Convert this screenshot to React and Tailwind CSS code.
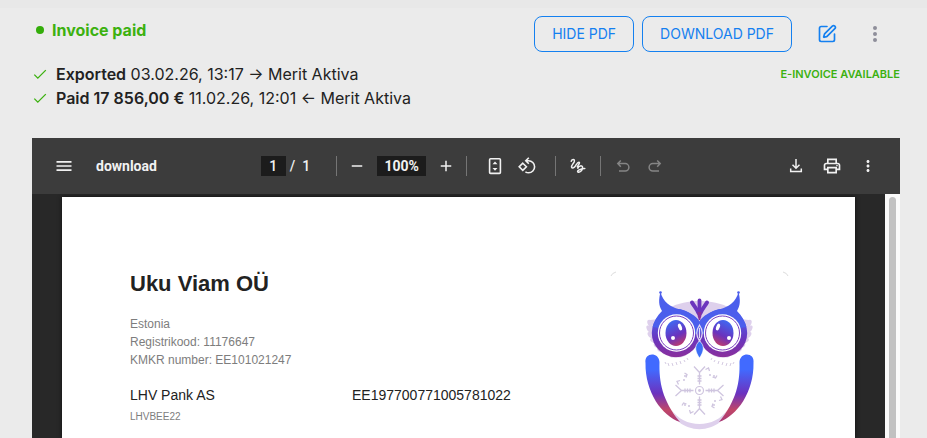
import { MdMenu, MdMoreVert, MdOutlinePrint, MdAdd, MdRemove } from 'react-icons/md'
import { SquarePen } from 'lucide-react'

const SYNC_LOG = [
  { id: 'export', label: 'Exported', detail: '03.02.26, 13:17 → Merit Aktiva' },
  { id: 'paid', label: 'Paid 17 856,00 €', detail: '11.02.26, 12:01 ← Merit Aktiva' },
]

export default function App() {
  return (
    <div className="flex flex-col h-screen overflow-hidden bg-[#ebebeb] border-t-8 border-[#e8e8e8] pl-8 pr-[27px] font-['Inter',sans-serif] text-[#222]">
      <InvoiceHeader />
      <SyncLog />
      <PdfViewer />
    </div>
  )
}

function InvoiceHeader() {
  return (
    <header className="flex items-start justify-between pt-2">
      <div className="flex items-center gap-2 h-7 pl-1">
        <span className="w-2 h-2 rounded-full bg-[#34ad0a]" />
        <h1 className="text-base font-bold text-[#3cb110]">Invoice paid</h1>
      </div>
      <div className="flex items-center gap-2">
        <OutlineButton>HIDE PDF</OutlineButton>
        <OutlineButton>DOWNLOAD PDF</OutlineButton>
        <button aria-label="Edit invoice" className="w-9 h-9 ml-[9px] flex items-center justify-center text-[#1480f0]">
          <SquarePen className="w-5 h-5" strokeWidth={2} />
        </button>
        <button aria-label="More actions" className="w-9 h-9 ml-1 mr-[7px] flex items-center justify-center text-[#8e8e9a]">
          <svg viewBox="0 0 20 20" className="w-5 h-5" fill="currentColor">
            <circle cx="10" cy="4" r="2" />
            <circle cx="10" cy="10" r="2" />
            <circle cx="10" cy="16" r="2" />
          </svg>
        </button>
      </div>
    </header>
  )
}

function OutlineButton({ children }) {
  return (
    <button className="h-9 px-[17px] rounded-lg border border-[#1480f0] text-sm text-[#1480f0] whitespace-nowrap">
      {children}
    </button>
  )
}

function SyncLog() {
  return (
    <div className="flex items-start justify-between pt-[10px] pb-7">
      <ul>
        {SYNC_LOG.map((entry) => (
          <li key={entry.id} className="flex items-center gap-2 text-base leading-6">
            <svg viewBox="0 0 16 16" className="w-4 h-4 text-[#3cb110]" fill="none" stroke="currentColor" strokeWidth="1.3">
              <path d="M2.3 8.6l3.5 3.5 8-8" />
            </svg>
            <span><b className="font-semibold">{entry.label}</b> {entry.detail}</span>
          </li>
        ))}
      </ul>
      <span className="text-[11px] leading-6 font-semibold text-[#3cb110]">E-INVOICE AVAILABLE</span>
    </div>
  )
}

function PdfViewer() {
  return (
    <section className="flex-1 min-h-0 flex flex-col bg-[#282828]">
      <PdfToolbar />
      <div className="flex-1 min-h-0 flex">
        <div className="flex-1 px-[30px] pt-[3px] overflow-hidden">
          <InvoicePage />
        </div>
        <div className="w-[15px] bg-[#fafafa] px-1 pt-[3px]">
          <div className="h-full rounded-t-full bg-[#c1c1c1]" />
        </div>
      </div>
    </section>
  )
}

function ToolButton({ label, disabled, children }) {
  return (
    <button
      aria-label={label}
      disabled={disabled}
      className="w-8 h-8 flex-shrink-0 flex items-center justify-center disabled:text-[#858585]"
    >
      {children}
    </button>
  )
}

function Divider({ className }) {
  return <div className={`w-px h-5 bg-[#757575] ${className}`} />
}

function PdfToolbar() {
  return (
    <div className="h-14 flex-shrink-0 flex items-center px-4 bg-[#3c3c3c] text-[#f1f1f1] text-sm font-medium font-['Roboto',sans-serif]">
      <div className="flex-1 flex items-center gap-4">
        <ToolButton label="Menu"><MdMenu size={20} /></ToolButton>
        <span className="font-bold">download</span>
      </div>

      <div className="flex items-center">
        <input aria-label="Page number" defaultValue="1" className="w-[25px] h-5 bg-[#1c1c1c] text-center" />
        <span className="ml-1">/</span>
        <span className="ml-[7px] mr-[26px]">1</span>
        <Divider className="mr-1" />
        <ToolButton label="Zoom out"><MdRemove size={18} /></ToolButton>
        <input aria-label="Zoom level" defaultValue="100%" className="w-[49px] h-5 mx-1 bg-[#1c1c1c] text-center font-bold" />
        <ToolButton label="Zoom in"><MdAdd size={18} /></ToolButton>
        <Divider className="ml-1 mr-3" />
        <ToolButton label="Fit to page"><FitIcon /></ToolButton>
        <ToolButton label="Rotate counterclockwise"><RotateIcon /></ToolButton>
        <Divider className="ml-3 mr-[6px]" />
        <ToolButton label="Draw"><DrawIcon /></ToolButton>
        <Divider className="mx-[6px]" />
        <ToolButton label="Undo" disabled><UndoIcon /></ToolButton>
        <ToolButton label="Redo" disabled><UndoIcon className="-scale-x-100" /></ToolButton>
      </div>

      <div className="flex-1 flex items-center justify-end gap-1">
        <ToolButton label="Download"><DownloadIcon /></ToolButton>
        <ToolButton label="Print"><MdOutlinePrint size={20} /></ToolButton>
        <ToolButton label="More"><MdMoreVert size={18} /></ToolButton>
      </div>
    </div>
  )
}

function FitIcon() {
  return (
    <svg viewBox="0 0 20 20" className="w-5 h-5" fill="none" stroke="currentColor" strokeWidth="1.6">
      <rect x="4.6" y="2.8" width="10.8" height="14.6" rx="1" />
      <path d="M7.500 8.300L10 5.600 12.500 8.300zM7.500 12L10 14.700 12.500 12z" fill="currentColor" stroke="none" />
    </svg>
  )
}

function RotateIcon() {
  return (
    <svg viewBox="0 0 20 20" className="w-5 h-5" fill="none" stroke="currentColor" strokeWidth="1.6">
      <path d="M5.800 7.200L9.400 10.800l-3.600 3.600-3.600-3.600z" />
      <path d="M11.800 1.800L8.800 4.800l3 3M9 4.800h2.600a6 6 0 0 1 6 6c0 3.300-2.700 6-6 6-1.300 0-2.300-.4-3.200-1" />
    </svg>
  )
}

function DrawIcon() {
  return (
    <svg viewBox="0 0 20 20" className="w-5 h-5" fill="none" stroke="currentColor" strokeWidth="1.5" strokeLinecap="round">
      <path d="M3.200 5.300C4 3 7 2.800 6.300 5.500 5.700 7.600 3.300 9 3.600 11 4 13 6.300 11.600 7.500 9.800 8.800 7.800 9.800 5.800 11 6.200 12.500 6.800 10 9 9.300 10.800M9.800 12.300C10.500 9.700 14.500 8.800 14.600 11.500 14.600 14.200 12 16.500 10.300 16.200 8 15.400 11.500 12.600 16.800 12.600" />
    </svg>
  )
}

function UndoIcon({ className }) {
  return (
    <svg viewBox="0 0 20 20" className={`w-5 h-5 ${className || ''}`} fill="none" stroke="currentColor" strokeWidth="1.5">
      <path d="M7.800 4.500L4.800 7.600l3 3.100M5 7.600h7.200a3.700 3.700 0 0 1 0 7.400H6" />
    </svg>
  )
}

function DownloadIcon() {
  return (
    <svg viewBox="0 0 20 20" className="w-5 h-5" fill="none" stroke="currentColor" strokeWidth="1.5">
      <path d="M10 3v9M6.500 8.700L10 12.200l3.500-3.500M4.700 12.500v3h10.600v-3" />
    </svg>
  )
}

function InvoicePage() {
  return (
    <article className="h-full flex justify-between bg-white pt-[73px] pl-[68px] pr-[66px] font-['Liberation_Sans',sans-serif] shadow-[0_0_4px_#111]">
      <div className="flex-1">
        <h2 className="text-[22px] leading-7 font-bold">Uku Viam OÜ</h2>
        <div className="mt-[17px] text-xs leading-[18px] text-[#7d7d7d]">
          <p>Estonia</p>
          <p>Registrikood: 11176647</p>
          <p>KMKR number: EE101021247</p>
        </div>
        <div className="mt-4 flex text-sm leading-5">
          <div className="w-[222px]">
            <p>LHV Pank AS</p>
            <p className="mt-[2px] text-[10px] leading-5 text-[#7d7d7d]">LHVBEE22</p>
          </div>
          <p>EE197700771005781022</p>
        </div>
      </div>
      <OwlLogo />
    </article>
  )
}

function OwlHalf() {
  return (
    <g>
      {/* cheek feathers */}
      <path d="M50 60c-4-1-3 4-1 6-4-2-3 4 0 6-3 0-1 5 2 6-2 2 0 4 3 5-1 3 1 4 3 5 0 3 2 4 5 4 1 3 4 3 6 3 2 3 5 3 8 2 4 1 8 0 12-3L70 58z" fill="#ded0ec" />
      <circle cx="76" cy="73" r="24.2" fill="url(#owlFace)" />
      {/* brow and ear tuft */}
      <path d="M60.500 32C58.500 40 58.500 45 62 51 57 56 54 61 52.600 67L98 74 100 62C96 55 88 51.500 80 49.500 70 47 63 42 60.500 32z" fill="#4b5eec" />
      <circle cx="60.500" cy="32.500" r="1.300" fill="#4b5eec" />
      <circle cx="76.500" cy="73" r="18.700" fill="#fff" />
      <circle cx="76.500" cy="73" r="17" fill="none" stroke="#7a3fc0" strokeWidth="1" />
      <ellipse cx="76" cy="73" rx="10.500" ry="13" fill="url(#owlEye)" />
      {/* wing */}
      <path d="M45.500 103C44 92 59 92 59.500 102 59 122 62 140 80 162 62 156 45 132 45.500 103z" fill="url(#owlWing)" />
      <path d="M65 102l1 2m2-1l1 3m3-3l1 3m3-4l1 3m3-4l1 3m3-4l1 2m2-4l1 2" stroke="#d5cbe2" strokeWidth="1" />
    </g>
  )
}

function SnowArm() {
  return (
    <g fill="none" stroke="#cfc5df" strokeWidth="1.300">
      <path d="M99.500 124.500V112M94 106.500l5.500 6 5.500-6M97.500 116h4M97.500 118.500h4M97.500 121h4" />
      <path d="M105.500 109.500l3-1.500 1 3M112.500 117l3 1 1.500-2.500" />
      <circle cx="110" cy="115" r=".4" />
      <circle cx="114" cy="116" r=".4" />
    </g>
  )
}

function OwlLogo() {
  return (
    <svg viewBox="0 0 200 178" className="w-[200px] h-[178px] -mt-[10px] -mr-[11px] flex-shrink-0" role="img" aria-label="Owl">
      <defs>
        <linearGradient id="owlFace" x1="0" y1="0" x2="0" y2="1">
          <stop offset=".2" stopColor="#4b5eec" />
          <stop offset=".6" stopColor="#6836c0" />
          <stop offset="1" stopColor="#8a2f9c" />
        </linearGradient>
        <linearGradient id="owlEye" x1=".3" y1="0" x2=".7" y2="1">
          <stop offset="0" stopColor="#3d6bf5" />
          <stop offset=".6" stopColor="#6a32bd" />
          <stop offset="1" stopColor="#c23c68" />
        </linearGradient>
        <linearGradient id="owlWing" x1="0" y1="0" x2="0" y2="1">
          <stop offset=".22" stopColor="#416aff" />
          <stop offset=".58" stopColor="#6c32be" />
          <stop offset=".82" stopColor="#c04668" />
          <stop offset="1" stopColor="#a83a78" />
        </linearGradient>
      </defs>
      <path d="M11 16q1-3 5-4M183 12q4 1 5 4" fill="none" stroke="#ddd" />
      <path d="M52 68C60 32 139 32 147 68z" fill="#ded0ec" />
      <path d="M71 149C84 169 115 169 128 149L120 162C109 171.500 90 171.500 79 162z" fill="#ded0ec" />
      <OwlHalf />
      <g transform="matrix(-1 0 0 1 199 0)"><OwlHalf /></g>
      <g fill="#fff">
        <ellipse cx="80" cy="67" rx="1.800" ry="3.500" transform="rotate(-20 80 67)" />
        <circle cx="73" cy="78" r="2" />
        <ellipse cx="118" cy="67" rx="1.800" ry="3.500" transform="rotate(20 118 67)" />
        <circle cx="129" cy="78" r="2" />
      </g>
      {/* forehead crest */}
      <g fill="none" stroke="#6c35bd" strokeLinecap="round">
        <path d="M99.500 56V40.500" strokeWidth="3.800" />
        <path d="M98.500 53C97 49 94 46 92 42.500M100.500 53C102 49 105 46 107 42.500" strokeWidth="4" />
      </g>
      <path d="M97.500 52h4l-1.200 8h-1.600z" fill="#8a2f9c" />
      <path d="M99.500 65q-5.500 8 0 16 5.500-8 0-16zM99.500 68v10" fill="none" stroke="#e6dcf5" strokeWidth="1.200" />
      <path d="M99.500 81c-6 5-4 11 0 17 4-6 6-12 0-17z" fill="#3c6ff7" stroke="#fff" strokeWidth=".6" />
      <circle cx="99.500" cy="130.500" r="4" fill="none" stroke="#cfc5df" strokeWidth="1.200" />
      <circle cx="99.500" cy="130.500" r="1.400" fill="#cfc5df" />
      <SnowArm />
      <g transform="rotate(90 99.500 130.500)"><SnowArm /></g>
      <g transform="rotate(180 99.500 130.500)"><SnowArm /></g>
      <g transform="rotate(270 99.500 130.500)"><SnowArm /></g>
    </svg>
  )
}
